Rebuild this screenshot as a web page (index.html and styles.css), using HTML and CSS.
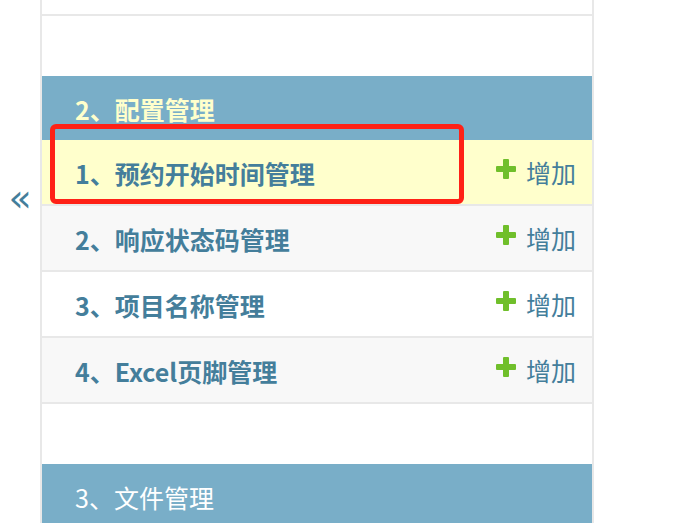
FILE: index.html
```html
<!DOCTYPE html>
<html lang="zh-CN">

<head>
    <meta charset="UTF-8">
    <title>站点管理</title>
    <link rel="stylesheet" href="styles.css">
</head>

<body>
    <div class="page">
        <div class="toggle">
            <button class="toggle-btn" type="button">&laquo;</button>
        </div>
        <nav class="sidebar">
            <div class="module">
                <div class="row row-white tail"></div>
            </div>

            <div class="module">
                <div class="caption current">2、配置管理</div>
                <div class="row current-model">
                    <a class="model" href="#">1、预约开始时间管理</a>
                    <a class="addlink" href="#"><span class="plus"></span>增加</a>
                </div>
                <div class="row row-gray">
                    <a class="model" href="#">2、响应状态码管理</a>
                    <a class="addlink" href="#"><span class="plus"></span>增加</a>
                </div>
                <div class="row row-white">
                    <a class="model" href="#">3、项目名称管理</a>
                    <a class="addlink" href="#"><span class="plus"></span>增加</a>
                </div>
                <div class="row row-gray">
                    <a class="model" href="#">4、Excel页脚管理</a>
                    <a class="addlink" href="#"><span class="plus"></span>增加</a>
                </div>
                <!-- red box marks the row in the screenshot -->
                <div class="highlight"></div>
            </div>

            <div class="module">
                <div class="caption">3、文件管理</div>
            </div>
        </nav>
    </div>
</body>

</html>
```

FILE: styles.css
```css
body {
    margin: 0;
    padding: 0;
    background-color: #fff;
    font-family: "Noto Sans CJK SC", "Noto Sans", sans-serif;
    color: #333;
}

a {
    text-decoration: none;
}

.page {
    display: flex;
    align-items: stretch;
    height: 523px;
    overflow: hidden;
}

.toggle {
    width: 40px;
    display: flex;
    justify-content: center;
}

.toggle-btn {
    margin-top: 176px;
    height: 44px;
    background: none;
    border: none;
    padding: 0;
    color: #447e9b;
    font-family: "DejaVu Sans", sans-serif;
    font-size: 38px;
    line-height: 44px;
    cursor: pointer;
}

.sidebar {
    width: 550px;
    border-left: 2px solid #e8e8e8;
    border-right: 2px solid #e8e8e8;
}

.module {
    position: relative;
    margin-bottom: 60px;
}

.caption {
    background-color: #79aec8;
    color: #fff;
    height: 64px;
    padding: 0 33px;
    font-size: 25px;
    line-height: 66px;
}

.caption.current {
    color: #ffc;
    font-weight: bold;
}

.row {
    display: flex;
    align-items: center;
    justify-content: space-between;
    height: 64px;
    padding: 0 16px 0 33px;
    border-bottom: 2px solid #e8e8e8;
}

.row-white {
    background-color: #fff;
}

.row-gray {
    background-color: #f8f8f8;
}

.current-model {
    background-color: #ffc;
}

.tail {
    height: 14px;
}

.model {
    color: #447e9b;
    font-size: 25px;
    font-weight: bold;
    padding-top: 2px;
}

.addlink {
    display: flex;
    align-items: center;
    color: #447e9b;
    font-size: 25px;
    padding-top: 0;
}

.plus {
    position: relative;
    width: 20px;
    height: 20px;
    margin-right: 10px;
    margin-top: -6px;
}

.plus::before,
.plus::after {
    content: "";
    position: absolute;
    background-color: #70bf2b;
    border-radius: 1px;
}

.plus::before {
    left: 7px;
    top: 0;
    width: 6px;
    height: 20px;
}

.plus::after {
    left: 0;
    top: 7px;
    width: 20px;
    height: 6px;
}

.highlight {
    position: absolute;
    left: 8px;
    top: 48px;
    width: 404px;
    height: 70px;
    border: 5px solid #ff2116;
    border-radius: 6px;
}
```
